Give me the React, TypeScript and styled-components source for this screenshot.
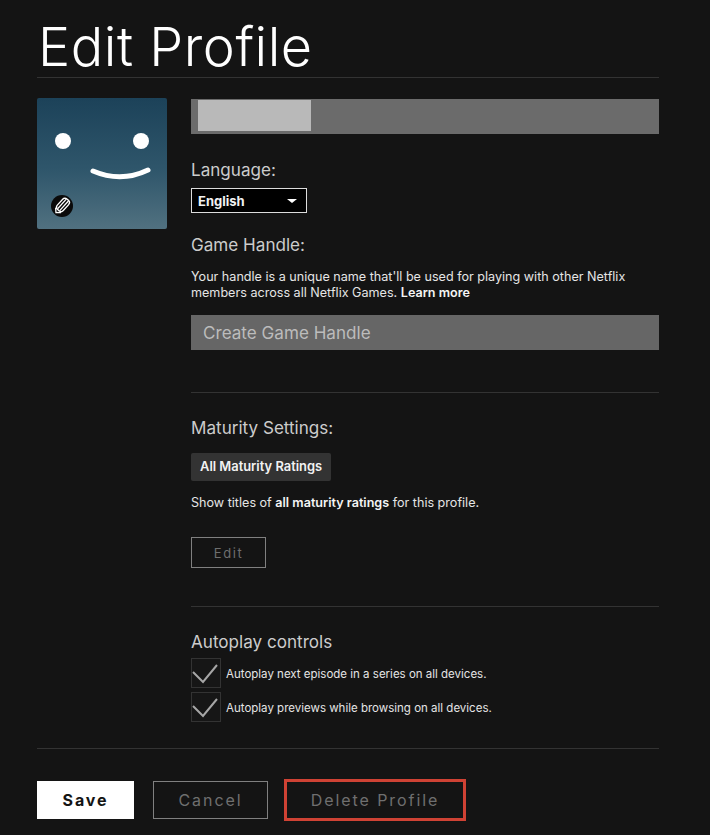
import React from 'react';
import styled, { createGlobalStyle } from 'styled-components';

const GlobalStyle = createGlobalStyle`
  html, body {
    margin: 0;
    padding: 0;
    background: #141414;
  }
  body {
    font-family: Inter, "Liberation Sans", sans-serif;
    color: #fff;
  }
`;

const Page = styled.div`
  width: 710px;
  height: 835px;
  box-sizing: border-box;
  padding: 0 51px 0 37px;
  overflow: hidden;
  background: #141414;
`;

const Title = styled.h1`
  margin: 0;
  height: 77px;
  box-sizing: border-box;
  padding: 15px 0 0 1px;
  font-size: 54px;
  line-height: 63px;
  letter-spacing: 0.55px;
  font-weight: 300;
  color: #fff;
`;

const Divider = styled.div`
  height: 1px;
  background: #333;
`;

const Main = styled.div`
  display: flex;
  gap: 24px;
  padding-top: 20px;
`;

const AvatarBox = styled.div`
  position: relative;
  flex: none;
  width: 130px;
  height: 131px;
  border-radius: 2px;
  background: linear-gradient(180deg, #1c4259 0%, #2f566b 55%, #517180 100%);
`;

const AvatarFace = styled.svg`
  display: block;
  width: 130px;
  height: 131px;
`;

const EditBadge = styled.svg`
  position: absolute;
  left: 14px;
  bottom: 12px;
  width: 22px;
  height: 22px;
`;

const Form = styled.div`
  flex: 1;
  min-width: 0;
  padding-top: 1px;
`;

const NameField = styled.div`
  height: 35px;
  box-sizing: border-box;
  padding: 1px 0 3px 7px;
  background: #6b6b6b;
`;

const NameRedaction = styled.div`
  width: 113px;
  height: 31px;
  background: #b9b9b9;
`;

const Label = styled.div<{ $top: number }>`
  margin-top: ${p => p.$top}px;
  font-size: 17.1px;
  line-height: 22px;
  font-weight: 400;
  color: #cccccc;
`;

const LanguageSelect = styled.div`
  width: 116px;
  height: 25px;
  margin-top: 7px;
  box-sizing: border-box;
  display: flex;
  align-items: center;
  justify-content: space-between;
  padding: 0 9px 0 6px;
  background: #000;
  border: 1px solid #ddd;
  font-size: 13px;
  font-weight: 700;
  color: #f2f2f2;
`;

const Caret = styled.span`
  width: 0;
  height: 0;
  border-left: 5px solid transparent;
  border-right: 5px solid transparent;
  border-top: 4px solid #fff;
`;

const Body = styled.p<{ $top: number }>`
  margin: ${p => p.$top}px 0 0;
  font-size: 12.6px;
  line-height: 16px;
  font-weight: 400;
  color: #e5e5e5;

  b {
    font-weight: 600;
    color: #f5f5f5;
  }
`;

const HandleField = styled.div`
  height: 35px;
  margin-top: 14px;
  padding-left: 12px;
  display: flex;
  align-items: center;
  background: #666;
  font-size: 17.1px;
  color: #bcbcbc;
`;

const SectionRule = styled(Divider)<{ $top: number }>`
  margin-top: ${p => p.$top}px;
`;

const RatingPill = styled.div`
  display: inline-block;
  height: 28px;
  margin-top: 14px;
  padding: 0 9px;
  border-radius: 2px;
  background: #333;
  font-size: 12.9px;
  line-height: 28px;
  font-weight: 600;
  color: #f2f2f2;
`;

const OutlineButton = styled.div<{ $width: number; $height: number; $size: number; $color: string }>`
  width: ${p => p.$width}px;
  height: ${p => p.$height}px;
  box-sizing: border-box;
  display: flex;
  align-items: center;
  justify-content: center;
  border: 1px solid #808080;
  font-size: ${p => p.$size}px;
  letter-spacing: 0.12em;
  color: ${p => p.$color};
`;

const EditButton = styled(OutlineButton)`
  margin-top: 26px;
`;

const CheckRows = styled.div`
  margin-top: 5px;
  display: flex;
  flex-direction: column;
  gap: 4px;
`;

const CheckRow = styled.div`
  display: flex;
  align-items: center;
  gap: 5px;
  height: 30px;
  font-size: 11.5px;
  color: #e5e5e5;
`;

const CheckText = styled.span`
  margin-top: 2px;
`;

const CheckBox = styled.div`
  flex: none;
  width: 30px;
  height: 30px;
  box-sizing: border-box;
  border: 1px solid #333;
  background: #161616;
`;

const CheckMark = styled.svg`
  display: block;
  width: 28px;
  height: 28px;
`;

const BottomRule = styled(Divider)`
  margin-top: 26px;
`;

const Footer = styled.div`
  margin-top: 30px;
  display: flex;
  align-items: center;
  height: 42px;
`;

const SaveButton = styled.div`
  width: 97px;
  height: 38px;
  display: flex;
  align-items: center;
  justify-content: center;
  background: #fff;
  color: #141414;
  font-size: 16px;
  font-weight: 700;
  letter-spacing: 0.12em;
`;

const CancelButton = styled(OutlineButton)`
  margin-left: 19px;
`;

const DeleteButton = styled(OutlineButton)`
  margin-left: 16px;
  border: 3px solid #cf4234;
`;

const checks = [
  'Autoplay next episode in a series on all devices.',
  'Autoplay previews while browsing on all devices.',
];

export default function App() {
  return (
    <Page>
      <GlobalStyle />
      <Title>Edit Profile</Title>
      <Divider />
      <Main>
        <AvatarBox>
          <AvatarFace viewBox="0 0 130 131">
            <circle cx="26" cy="43" r="8" fill="#fff" />
            <circle cx="104" cy="43" r="8" fill="#fff" />
            <path d="M56 73 Q84 85 111 72" fill="none" stroke="#fff" strokeWidth="5" strokeLinecap="round" />
          </AvatarFace>
          <EditBadge viewBox="0 0 22 22">
            <circle cx="11" cy="11" r="11" fill="#0a0a0a" />
            <g transform="rotate(42 11 11)" fill="none" stroke="#fff" strokeWidth="1.3">
              <rect x="7" y="2.5" width="8" height="14" rx="3" />
              <path d="M9.6 3v13M12.4 3v13" />
              <path d="M7.4 16.5 11 20l3.6-3.5" />
            </g>
          </EditBadge>
        </AvatarBox>
        <Form>
          <NameField>
            <NameRedaction />
          </NameField>
          <Label $top={25}>Language:</Label>
          <LanguageSelect>
            English
            <Caret />
          </LanguageSelect>
          <Label $top={21}>Game Handle:</Label>
          <Body $top={13}>
            Your handle is a unique name that'll be used for playing with other Netflix members across all Netflix Games. <b>Learn more</b>
          </Body>
          <HandleField>Create Game Handle</HandleField>
          <SectionRule $top={42} />
          <Label $top={24}>Maturity Settings:</Label>
          <RatingPill>All Maturity Ratings</RatingPill>
          <Body $top={14}>
            Show titles of <b>all maturity ratings</b> for this profile.
          </Body>
          <EditButton $width={75} $height={31} $size={13} $color="#6f6f6f">Edit</EditButton>
          <SectionRule $top={38} />
          <Label $top={24}>Autoplay controls</Label>
          <CheckRows>
            {checks.map(text => (
              <CheckRow key={text}>
                <CheckBox>
                  <CheckMark viewBox="0 0 28 28">
                    <path d="M1 13l10 10L25 6" fill="none" stroke="#a6a6a6" strokeWidth="2" />
                  </CheckMark>
                </CheckBox>
                <CheckText>{text}</CheckText>
              </CheckRow>
            ))}
          </CheckRows>
        </Form>
      </Main>
      <BottomRule />
      <Footer>
        <SaveButton>Save</SaveButton>
        <CancelButton $width={115} $height={38} $size={16} $color="#6f6f6f">Cancel</CancelButton>
        <DeleteButton $width={182} $height={42} $size={16} $color="#6f6f6f">Delete Profile</DeleteButton>
      </Footer>
    </Page>
  );
}
